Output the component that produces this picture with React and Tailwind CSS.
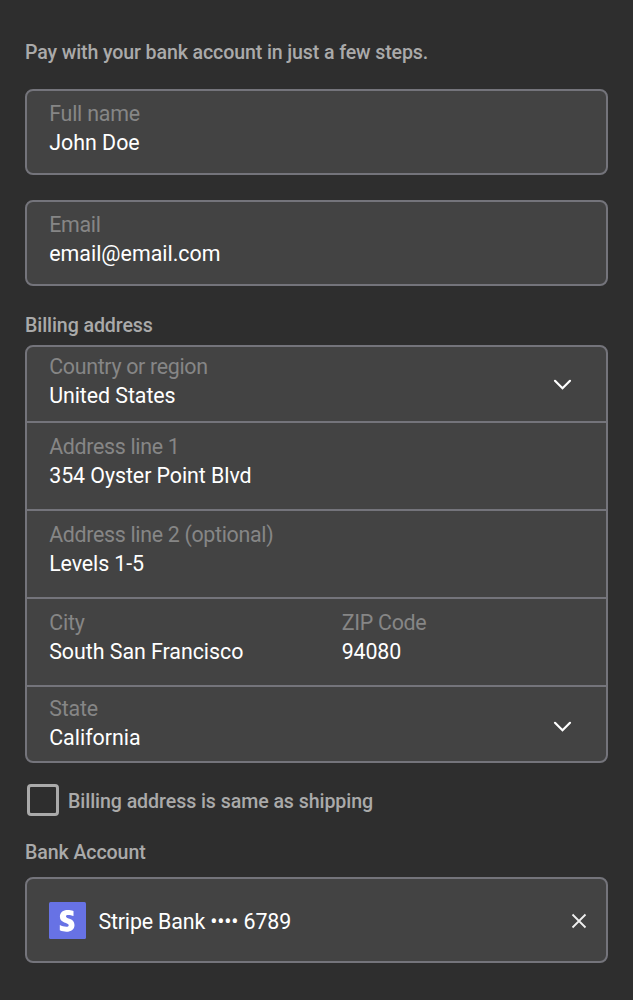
const label = "text-[21.4px] leading-[29px] text-[#868686] whitespace-nowrap";
const value = "text-[21.4px] leading-[29px] text-white whitespace-nowrap";
const heading = "text-[19.6px] leading-6 font-medium text-[#aaaaaa] whitespace-nowrap";
const card = "rounded-[8px] border-2 border-[#74747b] bg-[#434343]";

function Field({ name, text, tracking = "tracking-[-0.32px]", valueTracking = "tracking-[-0.07px]" }) {
  return (
    <div>
      <div className={`${label} ${tracking}`}>{name}</div>
      <div className={`${value} ${valueTracking}`}>{text}</div>
    </div>
  );
}

function Chevron() {
  return (
    <svg className="h-6 w-6" viewBox="0 0 24 24" fill="none" stroke="white" strokeWidth="2.2" strokeLinecap="round">
      <path d="M4 8.800l7.500 7.500 7.500-7.500" />
    </svg>
  );
}

export default function App() {
  return (
    <main className="flex h-[1000px] w-[633px] flex-col bg-[#2e2e2e] pl-[25px] pt-10 font-['Roboto',sans-serif]">
      <p className={`${heading} pt-px tracking-[-0.125px]`}>Pay with your bank account in just a few steps.</p>
      <div className={`${card} mt-6 h-[86px] w-[583px] px-[22.2px] pt-[8px]`}>
        <Field name="Full name" text="John Doe" tracking="tracking-[-0.22px]" valueTracking="tracking-normal" />
      </div>
      <div className={`${card} mt-[25px] h-[86px] w-[583px] px-[22.2px] pt-[8px]`}>
        <Field name="Email" text="email@email.com" valueTracking="tracking-normal" />
      </div>
      <h2 className={`${heading} mt-[28px] tracking-[-0.1px]`}>Billing address</h2>
      <div className={`${card} mt-[7px] h-[418px] w-[583px]`}>
        <div className="flex h-[76px] justify-between border-b-2 border-[#74747b] px-[22.2px] pt-[5px]">
          <Field name="Country or region" text="United States" />
          <div className="mt-[20px] mr-[8.8px]"><Chevron /></div>
        </div>
        <div className="h-[88px] border-b-2 border-[#74747b] px-[22.2px] pt-[9px]">
          <Field name="Address line 1" text="354 Oyster Point Blvd" />
        </div>
        <div className="h-[88px] border-b-2 border-[#74747b] px-[22.2px] pt-[9px]">
          <Field name="Address line 2 (optional)" text="Levels 1-5" valueTracking="tracking-[-0.1px]" />
        </div>
        <div className="grid h-[88px] grid-cols-[292.5px_1fr] border-b-2 border-[#74747b] px-[22.2px] pt-[9px]">
          <Field name="City" text="South San Francisco" tracking="tracking-[-0.2px]" valueTracking="tracking-[-0.04px]" />
          <Field name="ZIP Code" text="94080" tracking="tracking-[-0.28px]" valueTracking="tracking-[-0.15px]" />
        </div>
        <div className="flex justify-between px-[22.2px] pt-[7px]">
          <Field name="State" text="California" tracking="tracking-[-0.2px]" valueTracking="tracking-normal" />
          <div className="mt-[20px] mr-[8.8px]"><Chevron /></div>
        </div>
      </div>
      <div className="mt-[21px] flex h-8 items-center gap-[9px] pl-[2px]">
        <span className="h-8 w-8 rounded-[4px] border-[3px] border-[#aaaaaa]" />
        <span className={`${heading} pt-[3px] tracking-[-0.075px]`}>Billing address is same as shipping</span>
      </div>
      <h2 className={`${heading} mt-[25px] tracking-[-0.1px]`}>Bank Account</h2>
      <div className={`${card} mt-[12px] flex h-[86px] w-[583px] items-center pl-[22px] pr-[17.5px]`}>
        <svg className="h-[37px] w-[37px]" viewBox="0 0 37 37">
          <rect width="37" height="37" rx="1.5" fill="#6772e5" />
          <path fill="white" d="M17 14.400c0-1 .8-1.400 2-1.400 1.900 0 4 .4 5.500 1.100V8.900c-2-.7-4-.9-5.700-.9-4.900 0-7.900 2.600-7.900 6.800 0 6.700 8.800 5.600 8.800 8.500 0 1.200-1 1.500-2.400 1.500-2.100 0-4.500-.7-6.500-1.700v5.200c2.300 1 4.400 1.400 6.500 1.400 5 0 8.200-2.500 8.200-6.800 0-7.200-8.500-5.900-8.500-8.500z" />
        </svg>
        <span className={`${value} ml-[12.4px] pt-[2px] tracking-[-0.16px]`}>Stripe Bank •••• 6789</span>
        <svg className="ml-auto mt-px h-5 w-5" viewBox="0 0 20 20" fill="none" stroke="#f0f0f0" strokeWidth="1.8"><path d="M3.500 3.500l13 13M16.500 3.500l-13 13" /></svg>
      </div>
    </main>
  );
}
